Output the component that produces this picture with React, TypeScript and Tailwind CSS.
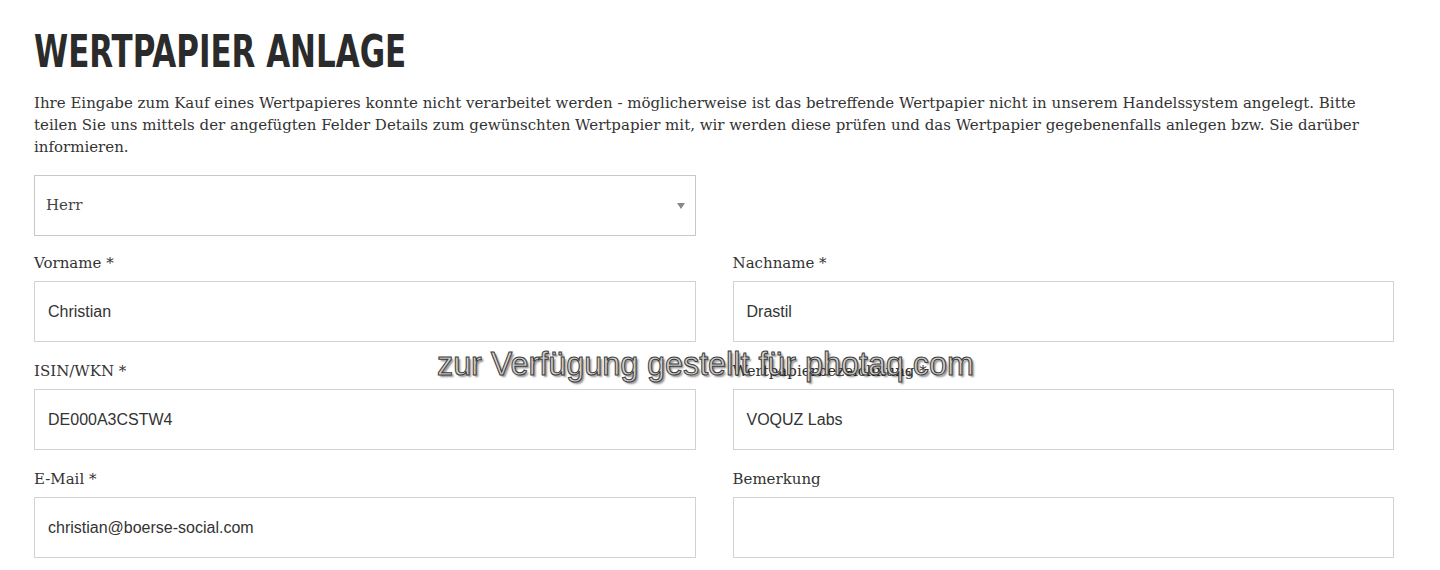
import { ReactNode } from "react";

const serif = "font-['DejaVu_Serif','Liberation_Serif',serif]";
const sans = "font-['Liberation_Sans',Arial,sans-serif]";

export default function App() {
    return (
        <div className="relative min-h-[570px] bg-white px-[34px] pt-[28px] text-[#333]">
            <h1 className="h-[48px] whitespace-nowrap font-['DejaVu_Sans_Condensed','DejaVu_Sans',sans-serif] text-[44px] leading-[48px] font-bold text-[#2b2b2b]">
                <span className="inline-block origin-left scale-x-[0.782]">WERTPAPIER ANLAGE</span>
            </h1>

            <p className={`${serif} mt-[16px] text-[15px] leading-[22px] text-[#333]`}>
                Ihre Eingabe zum Kauf eines Wertpapieres konnte nicht verarbeitet werden - möglicherweise ist das betreffende
                Wertpapier nicht in unserem Handelssystem angelegt. Bitte
                <br />
                teilen Sie uns mittels der angefügten Felder Details zum gewünschten Wertpapier mit, wir werden diese prüfen
                und das Wertpapier gegebenenfalls anlegen bzw. Sie darüber
                <br />
                informieren.
            </p>

            <form className="mt-[17px] w-[1360px]">
                <div className="grid grid-cols-2 gap-x-[37px]">
                    <div className="flex h-[61px] items-center justify-between border border-[#c8c8c8] pl-[11px] pr-[10px]">
                        <span className={`${serif} text-[15px] text-[#444]`}>Herr</span>
                        <span className="mt-[1px] h-0 w-0 border-x-[4px] border-t-[6px] border-x-transparent border-t-[#888]" />
                    </div>
                </div>

                <div className="mt-[17px] grid grid-cols-2 gap-x-[37px] gap-y-[19px]">
                    <Field label="Vorname *" value="Christian" />
                    <Field label="Nachname *" value="Drastil" />
                    <Field label="ISIN/WKN *" value="DE000A3CSTW4" />
                    <Field label="Wertpapierbezeichnung *" value="VOQUZ Labs" />
                    <Field label="E-Mail *" value="christian@boerse-social.com" />
                    <Field label="Bemerkung" value="" />
                </div>
            </form>

            <div
                className={`${sans} pointer-events-none absolute left-[437px] top-[346px] whitespace-nowrap text-[32.3px] leading-[36px] text-[#cfcfcf] [-webkit-text-stroke:1px_#3a3a3a] [text-shadow:2px_2px_2px_rgba(0,0,0,0.45)]`}
            >
                zur Verfügung gestellt für photaq.com
            </div>
        </div>
    );
}

const Field = ({ label, value }: { label: string; value: string; children?: ReactNode }) => (
    <label className="flex flex-col">
        <span className={`${serif} text-[15px] leading-[20px] text-[#333]`}>{label}</span>
        <span className="mt-[8px] flex h-[61px] items-center border border-[#d2d2d2] px-[13px]">
            <span className={`${sans} text-[16px] text-[#333]`}>{value}</span>
        </span>
    </label>
);
